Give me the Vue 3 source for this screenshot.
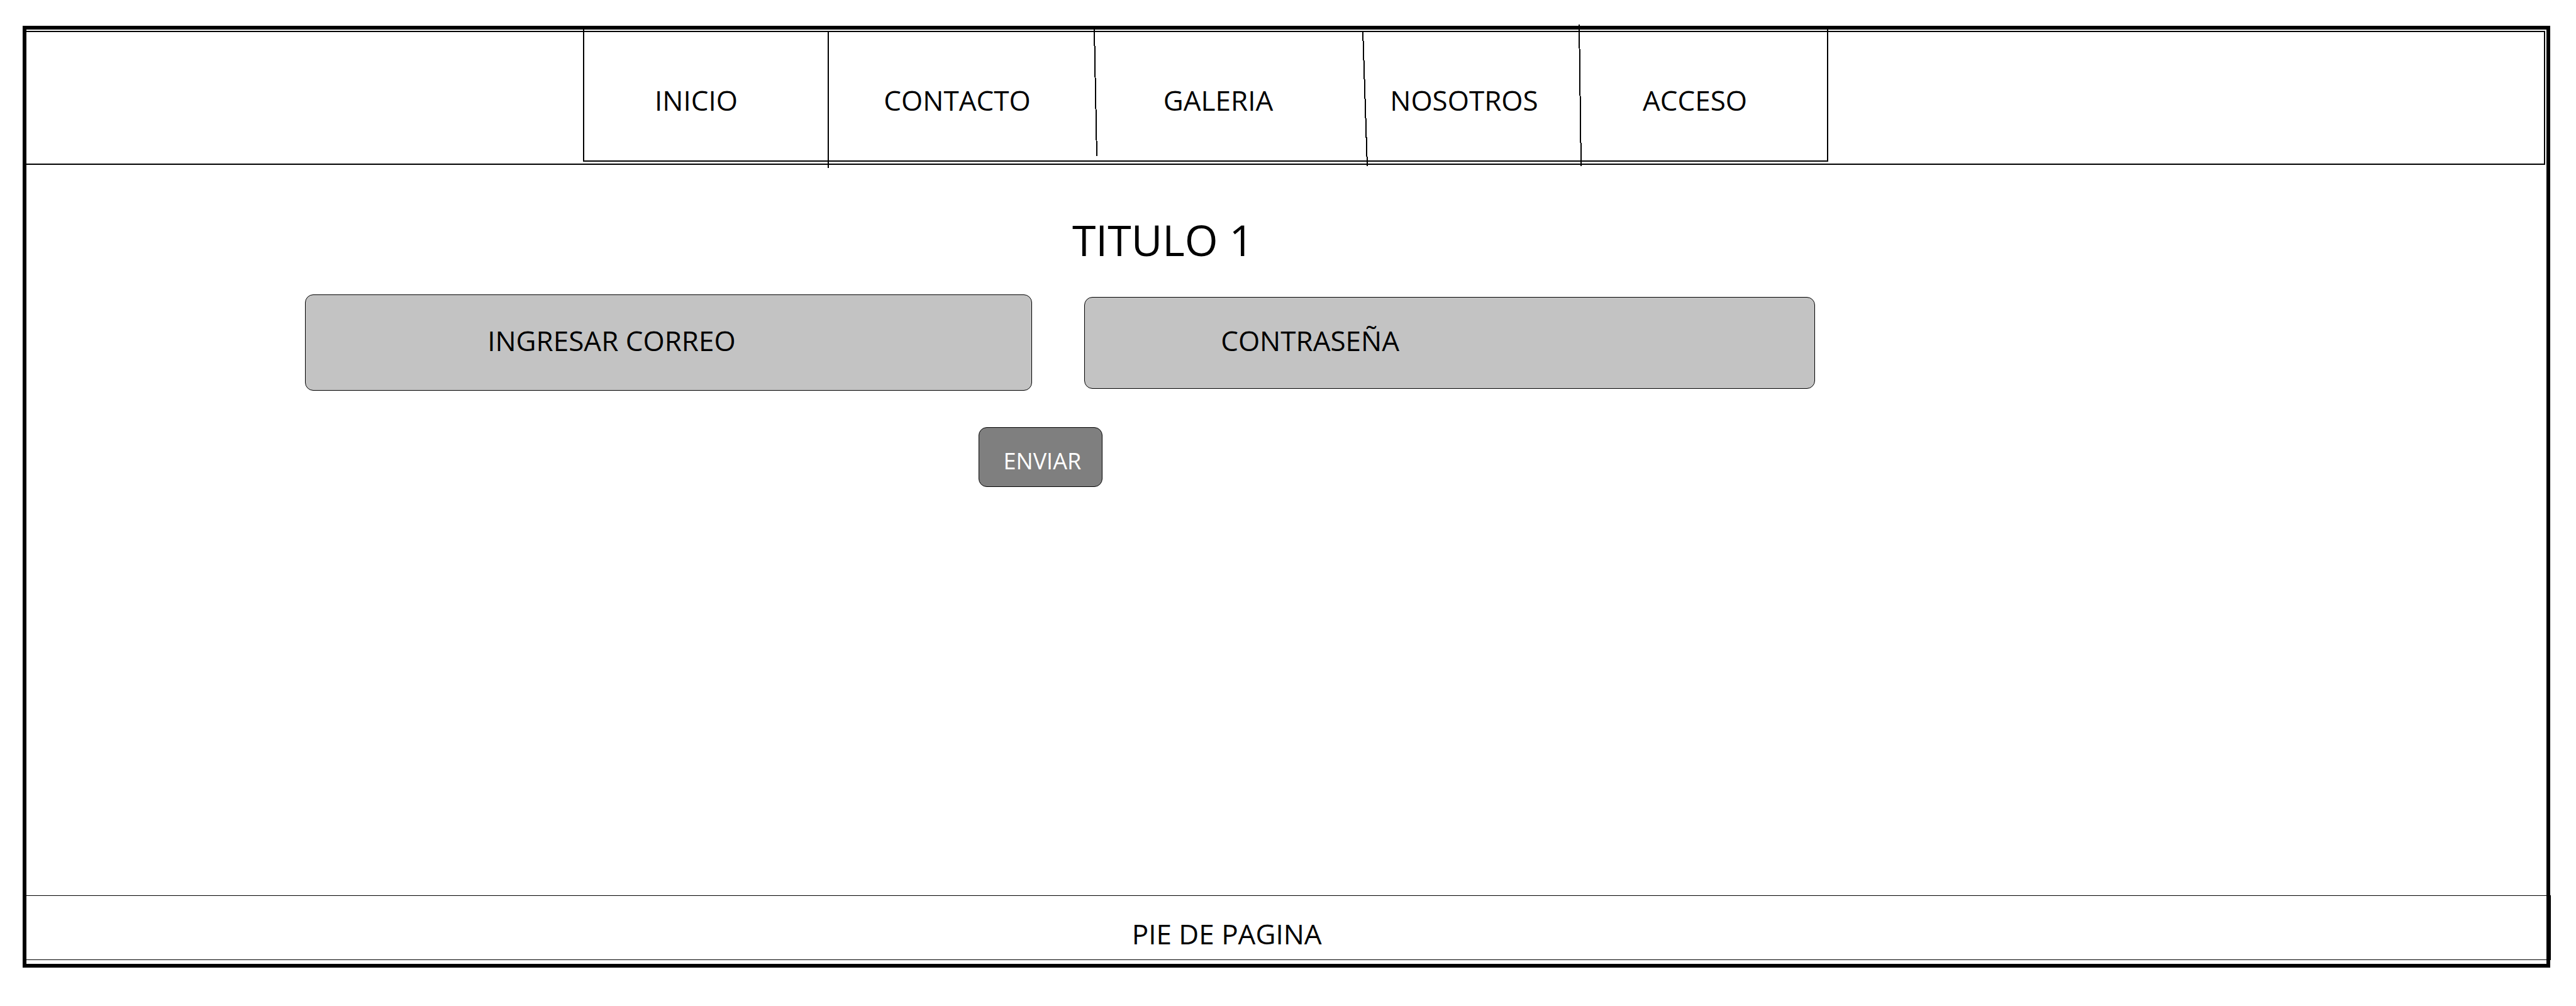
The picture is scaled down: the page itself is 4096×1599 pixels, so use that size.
<script setup>
const links = [
  { id: 'inicio', label: 'INICIO' },
  { id: 'contacto', label: 'CONTACTO' },
  { id: 'galeria', label: 'GALERIA' },
  { id: 'nosotros', label: 'NOSOTROS' },
  { id: 'acceso', label: 'ACCESO' },
]

// Hand-drawn separators between the menu entries
const dividers = [
  { x1: 388, y1: 2, x2: 388, y2: 220 },
  { x1: 811, y1: 0, x2: 815, y2: 201 },
  { x1: 1238, y1: 2, x2: 1245, y2: 217 },
  { x1: 1582, y1: -8, x2: 1585, y2: 217 },
]
</script>

<template>
  <div class="page">
    <header class="header">
      <nav class="menu">
        <a v-for="link in links" :key="link.id" class="menu-link" :href="'#' + link.id">{{ link.label }}</a>
        <svg class="dividers" viewBox="0 0 1976 208" preserveAspectRatio="none" aria-hidden="true">
          <line v-for="(d, i) in dividers" :key="i" :x1="d.x1" :y1="d.y1" :x2="d.x2" :y2="d.y2" />
        </svg>
      </nav>
    </header>

    <main class="main">
      <h1 class="title">TITULO 1</h1>
      <form @submit.prevent>
        <div class="fields">
          <input class="field email" type="email" placeholder="INGRESAR CORREO" aria-label="INGRESAR CORREO" />
          <input class="field password" type="password" placeholder="CONTRASEÑA" aria-label="CONTRASEÑA" />
        </div>
        <button class="send" type="submit">ENVIAR</button>
      </form>
    </main>

    <footer class="footer">
      <p class="footer-text">PIE DE PAGINA</p>
    </footer>
  </div>
</template>

<style>
body {
  margin: 0;
  background: #fff;
}
</style>

<style scoped>
.page {
  box-sizing: border-box;
  display: flex;
  flex-direction: column;
  min-height: calc(100vh - 102px);
  margin: 41px 41px 61px 36px;
  border: 6px solid #000;
  color: #000;
  font-family: "Open Sans", "Noto Sans", sans-serif;
  font-size: 44px;
  line-height: 60px;
}

.header {
  display: grid;
  grid-template-columns: 885fr 1980fr 1138fr;
  box-sizing: border-box;
  height: 213px;
  margin: 2px 2px 0 0;
  border: solid #000;
  border-width: 2px 2px 2px 0;
}

.menu {
  position: relative;
  grid-column: 2;
  display: grid;
  grid-template-columns: 356fr 474fr 356fr 426fr 308fr 56fr;
  margin: -4px 0 3px;
  border: solid #000;
  border-width: 0 2px 2px;
}

.menu-link {
  display: flex;
  align-items: center;
  justify-content: center;
  padding-top: 16px;
  color: inherit;
  text-decoration: none;
}

.dividers {
  position: absolute;
  inset: 0;
  width: 100%;
  height: 100%;
  overflow: visible;
  pointer-events: none;
}

.dividers line {
  stroke: #000;
  stroke-width: 2px;
  shape-rendering: crispEdges;
}

.main {
  flex: 1;
}

.title {
  margin: 73px 0 41px 41.5%;
  font-size: 68px;
  font-weight: 400;
  line-height: 92px;
}

.fields {
  display: grid;
  grid-template-columns: 1156fr 1162fr;
  column-gap: 83px;
  align-items: center;
  margin: 0 29.02% 0 11.06%;
}

.field {
  box-sizing: border-box;
  width: 100%;
  min-width: 0;
  border: 1px solid #000;
  border-radius: 13px;
  background: #c3c3c3;
  color: #000;
  font: inherit;
}

.field::placeholder {
  color: #000;
  opacity: 1;
}

.email {
  height: 153px;
  padding: 0 0 8px 289px;
}

.password {
  height: 146px;
  padding: 0 0 8px 216px;
}

.send {
  display: block;
  box-sizing: border-box;
  width: 197px;
  height: 95px;
  margin: 58px 0 0 37.78%;
  padding: 12px 0 0 6px;
  border: 1px solid #000;
  border-radius: 13px;
  background: #7f7f7f;
  color: #fff;
  font: inherit;
  font-size: 36px;
  line-height: 48px;
}

.footer {
  box-sizing: border-box;
  height: 103px;
  margin: 0 -7px 6px 0;
  padding-top: 30px;
  border: solid #000;
  border-width: 1px 1px 1px 0;
}

.footer-text {
  margin: 0 0 0 43.8%;
}
</style>
